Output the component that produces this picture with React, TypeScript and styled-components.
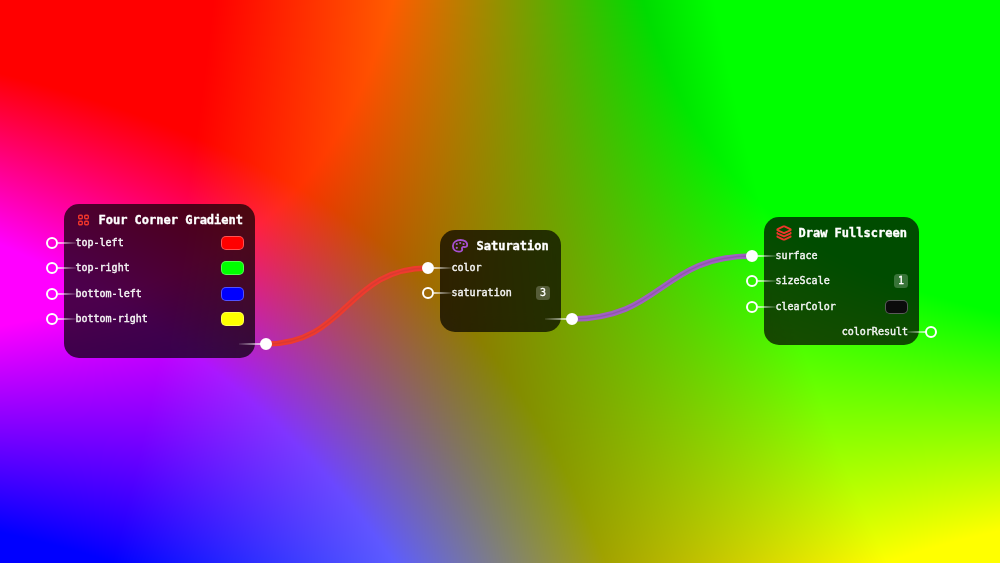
import React, { useEffect, useRef } from "react";
import styled, { createGlobalStyle } from "styled-components";
import { Layers } from "lucide-react";

const Global = createGlobalStyle`
  html, body { margin: 0; padding: 0; background: #000; overflow: hidden; }
  #root { width: 1000px; height: 563px; }
`;

const Stage = styled.div`
  position: relative;
  width: 1000px;
  height: 563px;
  overflow: hidden;
  font-family: "DejaVu Sans Mono", "Liberation Mono", monospace;
  color: #fff;
`;

const Backdrop = styled.canvas`
  position: absolute;
  inset: 0;
  display: block;
`;

const Wires = styled.svg`
  position: absolute;
  inset: 0;
  pointer-events: none;
`;

const Node = styled.div<{ $x: number; $y: number; $w: number; $h: number }>`
  position: absolute;
  left: ${(p) => p.$x}px;
  top: ${(p) => p.$y}px;
  width: ${(p) => p.$w}px;
  height: ${(p) => p.$h}px;
  box-sizing: border-box;
  padding: 0 11px 0 11.5px;
  display: flex;
  flex-direction: column;
  border-radius: 15px;
  background: rgba(0, 0, 0, 0.7);
  backdrop-filter: blur(8px);
`;

const Header = styled.div<{ $gap: number; $h: number }>`
  display: flex;
  align-items: center;
  gap: ${(p) => p.$gap}px;
  height: ${(p) => p.$h}px;
  box-sizing: border-box;
  padding-top: 6px;
  flex: none;
`;

const Title = styled.span`
  font-size: 12px;
  font-weight: 700;
  line-height: 16px;
  -webkit-text-stroke: 0.35px #fff;
  white-space: nowrap;
`;

const Row = styled.div<{ $end?: boolean }>`
  position: relative;
  display: flex;
  align-items: center;
  justify-content: ${(p) => (p.$end ? "flex-end" : "space-between")};
  height: 25.33px;
  flex: none;
`;

const Label = styled.span`
  font-size: 10px;
  font-weight: 500;
  line-height: 12px;
  color: #f6f6f6;
  -webkit-text-stroke: 0.4px #f6f6f6;
  white-space: nowrap;
`;

const Swatch = styled.span<{ $color: string }>`
  width: 23px;
  height: 14px;
  box-sizing: border-box;
  border-radius: 5px;
  border: 1px solid rgba(255, 255, 255, 0.32);
  background: ${(p) => p.$color};
`;

const Badge = styled.span`
  width: 14px;
  height: 14px;
  border-radius: 3.5px;
  background: rgba(255, 255, 255, 0.22);
  font-size: 10px;
  line-height: 14px;
  text-align: center;
  color: #fff;
  -webkit-text-stroke: 0.3px #fff;
`;

const Port = styled.span<{ $side: "in" | "out"; $on?: boolean; $lead: number; $reach: number }>`
  position: absolute;
  top: 50%;
  ${(p) => (p.$side === "in" ? `left: ${p.$reach}px;` : `right: ${p.$reach}px;`)}
  width: 12px;
  height: 12px;
  margin-top: -6px;
  box-sizing: border-box;
  border-radius: 50%;
  border: 2px solid #fff;
  background: ${(p) => (p.$on ? "#fff" : "transparent")};

  &::after {
    content: "";
    position: absolute;
    top: 3px;
    height: 2px;
    width: ${(p) => p.$lead}px;
    ${(p) =>
      p.$side === "in"
        ? "left: 9.5px; background: linear-gradient(to right, rgba(255,255,255,.7), rgba(255,255,255,.08));"
        : "right: 9.5px; background: linear-gradient(to left, rgba(255,255,255,.7), rgba(255,255,255,.08));"}
  }
`;

const Wire = styled.path<{ $w: number; $c: string }>`
  fill: none;
  stroke: ${(p) => p.$c};
  stroke-width: ${(p) => p.$w};
`;

const GridIcon = () => (
  <svg width={15} height={15} viewBox="0 0 15 15" fill="none" stroke="#ee352b" strokeWidth={1.4} style={{ flex: "none" }}>
    <rect x={2.7} y={2.2} width={3.6} height={3.6} rx={1} />
    <rect x={8.7} y={2.2} width={3.6} height={3.6} rx={1} />
    <rect x={2.7} y={8.2} width={3.6} height={3.6} rx={1} />
    <rect x={8.7} y={8.2} width={3.6} height={3.6} rx={1} />
  </svg>
);

const PaletteIcon = () => (
  <svg width={16} height={14} viewBox="0 0 16 14" fill="none" stroke="#a650d2" strokeWidth={1.8} style={{ flex: "none" }}>
    <path d="M8.5 1 C12.5 1 15.2 3 15.2 5.7 C15.2 7.9 13.3 8.3 12 7.9 C10.6 7.5 9.6 8.6 10.1 10 C10.6 11.5 9.2 12.6 7 12.6 C3.4 12.6 .9 10.4 .9 7 C.9 3.4 4.2 1 8.5 1Z" />
    <circle cx={4.8} cy={5} r={1.1} fill="#a650d2" stroke="none" />
    <circle cx={8.2} cy={4} r={1.1} fill="#a650d2" stroke="none" />
    <circle cx={11.6} cy={5} r={1.1} fill="#a650d2" stroke="none" />
    <circle cx={4.8} cy={8.8} r={1.1} fill="#a650d2" stroke="none" />
  </svg>
);

const Bg: React.FC = () => {
  const ref = useRef<HTMLCanvasElement>(null);
  useEffect(() => {
    const c = ref.current;
    if (!c) return;
    const ctx = c.getContext("2d");
    if (!ctx) return;
    const W = c.width;
    const H = c.height;
    const img = ctx.createImageData(W, H);
    const clamp = (v: number) => Math.max(0, Math.min(1, v));
    for (let y = 0; y < H; y++) {
      const v = y / (H - 1);
      for (let x = 0; x < W; x++) {
        const u = x / (W - 1);
        const r = (1 - v) * (1 - u) + v * u;
        const g = (1 - v) * u + v * u;
        const b = v * (1 - u);
        const l = 0.2126 * r + 0.7152 * g + 0.0722 * b;
        const i = (y * W + x) * 4;
        img.data[i] = clamp(l + 3 * (r - l)) * 255;
        img.data[i + 1] = clamp(l + 3 * (g - l)) * 255;
        img.data[i + 2] = clamp(l + 3 * (b - l)) * 255;
        img.data[i + 3] = 255;
      }
    }
    ctx.putImageData(img, 0, 0);
  }, []);
  return <Backdrop ref={ref} width={1000} height={563} />;
};

export default function App() {
  return (
    <Stage>
      <Global />
      <Bg />
      <Wires width={1000} height={563} viewBox="0 0 1000 563">
        <Wire d="M266 344 C347 344 347 268 428 268" $c="#ee3b2e" $w={5.5} />
        <Wire d="M266 344 C347 344 347 268 428 268" $c="#da3a33" $w={1.5} />
        <Wire d="M572 319 C662 319 662 256 752 256" $c="#a060c2" $w={5.5} />
        <Wire d="M572 319 C662 319 662 256 752 256" $c="#9056b0" $w={1.5} />
      </Wires>

      <Node $x={64} $y={204} $w={191} $h={154}>
        <Header $gap={8} $h={26.5}>
          <GridIcon />
          <Title>Four Corner Gradient</Title>
        </Header>
        <Row><Port $side="in" $reach={-29.5} $lead={18} /><Label>top-left</Label><Swatch $color="#ff0000" /></Row>
        <Row><Port $side="in" $reach={-29.5} $lead={18} /><Label>top-right</Label><Swatch $color="#00ff00" /></Row>
        <Row><Port $side="in" $reach={-29.5} $lead={18} /><Label>bottom-left</Label><Swatch $color="#0000ff" /></Row>
        <Row><Port $side="in" $reach={-29.5} $lead={18} /><Label>bottom-right</Label><Swatch $color="#ffff00" /></Row>
        <Row $end><Port $side="out" $reach={-28} $on $lead={22} /></Row>
      </Node>

      <Node $x={440} $y={230} $w={121} $h={102}>
        <Header $gap={9} $h={25.5}>
          <PaletteIcon />
          <Title>Saturation</Title>
        </Header>
        <Row><Port $side="in" $reach={-29.5} $on $lead={18} /><Label>color</Label></Row>
        <Row><Port $side="in" $reach={-29.5} $lead={18} /><Label>saturation</Label><Badge>3</Badge></Row>
        <Row $end><Port $side="out" $reach={-28} $on $lead={22} /></Row>
      </Node>

      <Node $x={764} $y={217} $w={155} $h={128}>
        <Header $gap={7} $h={26.4}>
          <Layers size={16} color="#ee352b" strokeWidth={2.8} />
          <Title>Draw Fullscreen</Title>
        </Header>
        <Row><Port $side="in" $reach={-29.5} $on $lead={18} /><Label>surface</Label></Row>
        <Row><Port $side="in" $reach={-29.5} $lead={18} /><Label>sizeScale</Label><Badge>1</Badge></Row>
        <Row><Port $side="in" $reach={-29.5} $lead={18} /><Label>clearColor</Label><Swatch $color="#0b0b0b" /></Row>
        <Row $end><Label>colorResult</Label><Port $side="out" $reach={-29} $lead={19} /></Row>
      </Node>
    </Stage>
  );
}
